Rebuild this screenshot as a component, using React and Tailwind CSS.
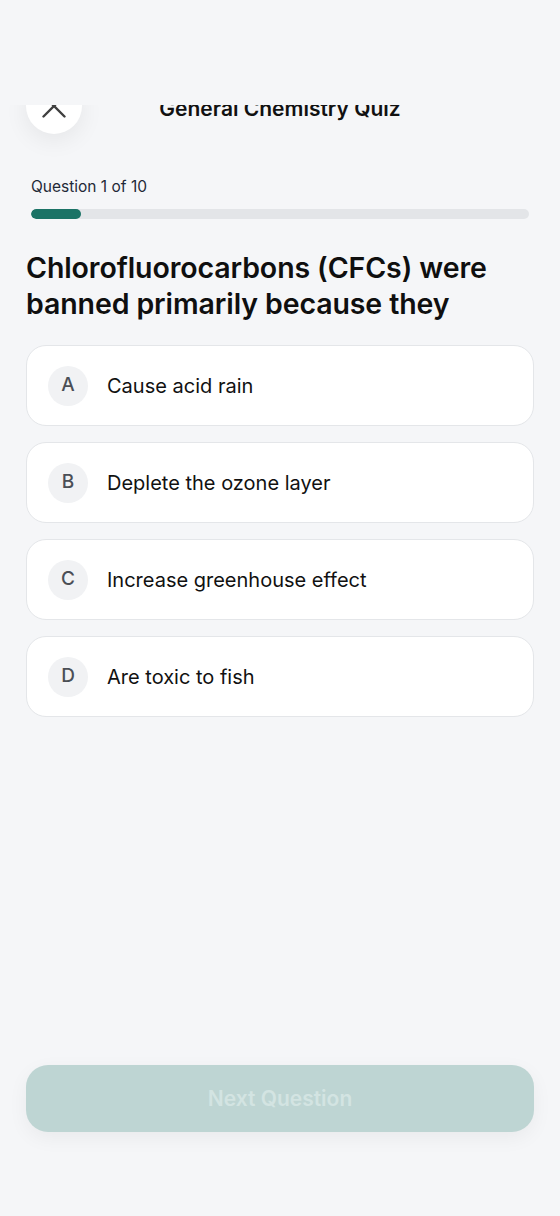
import React from "react";

const options = [
  { letter: "A", text: "Cause acid rain" },
  { letter: "B", text: "Deplete the ozone layer" },
  { letter: "C", text: "Increase greenhouse effect" },
  { letter: "D", text: "Are toxic to fish" },
];

export default function App() {
  return (
    <div
      className="flex flex-col h-[1216px] w-full bg-[#f5f6f8] text-[#111827]"
      style={{ fontFamily: "Inter, 'Noto Sans', sans-serif" }}
    >
      {/* header, clipped at top */}
      <div className="mt-[105px] h-[72px] overflow-hidden shrink-0">
        <div className="-mt-[27px] grid grid-cols-[56px_1fr_56px] items-center px-[26px]">
          <button className="w-[56px] h-[56px] rounded-full bg-white flex items-center justify-center shadow-[0_6px_24px_rgba(0,0,0,0.07)]">
            <svg width="24" height="24" viewBox="0 0 24 24" fill="none" stroke="#3f3f3f" strokeWidth="2.4" strokeLinecap="round" strokeLinejoin="round">
              <path d="M22.5 1.5 1.5 22.5" />
              <path d="M1.5 1.5l21 21" />
            </svg>
          </button>
          <div className="mt-[5px] text-center text-[21px] font-semibold text-[#111]">General Chemistry Quiz</div>
          <div />
        </div>
      </div>

      <div className="px-[26px] flex flex-col">
        <div className="pl-[5px] text-[15.5px] leading-5 text-[#1f2937]">Question 1 of 10</div>
        <div className="mt-3 ml-[5px] mr-[5px] h-[10px] rounded-full bg-[#e3e5e8] overflow-hidden">
          <div className="h-full w-[10%] rounded-full bg-[#1b7366]" />
        </div>

        <h1 className="mt-[31px] text-[28.5px] leading-[36px] font-semibold text-[#0f0f0f] tracking-[-0.1px]">
          Chlorofluorocarbons (CFCs) were banned primarily because they
        </h1>

        <div className="mt-[23px] flex flex-col gap-4">
          {options.map((o) => (
            <div
              key={o.letter}
              className="h-[81px] rounded-[20px] bg-white border border-[#e4e6e9] flex items-center pl-[21px] gap-[19px]"
            >
              <div className="w-[40px] h-[40px] rounded-full bg-[#f1f2f4] flex items-center justify-center text-[19px] font-medium text-[#4b4f56]">
                {o.letter}
              </div>
              <div className="text-[20px] text-[#111]">{o.text}</div>
            </div>
          ))}
        </div>
      </div>

      <div className="mt-auto px-[26px] pb-[84px]">
        <button className="w-full h-[67px] rounded-[22px] bg-[#bed5d3] text-[21px] font-semibold text-[#d3e4e2] shadow-[0_6px_20px_rgba(0,0,0,0.05)]">
          Next Question
        </button>
      </div>
    </div>
  );
}
